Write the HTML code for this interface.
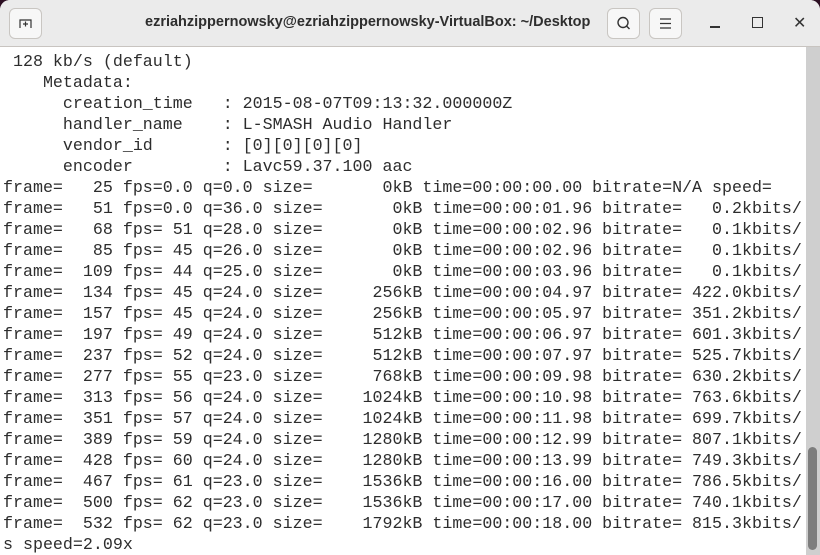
<!DOCTYPE html>
<html><head><style>
html,body{margin:0;padding:0;width:820px;height:555px;overflow:hidden;background:#2c0f22;}
.win{position:absolute;left:0;top:0;width:820px;height:555px;background:#fff;border-radius:10px 10px 0 0;overflow:hidden;}
.tb{position:absolute;left:0;top:0;width:820px;height:46px;background:#ebebeb;border-bottom:1px solid #c8c4c0;}
.title{position:absolute;left:145px;top:14px;white-space:nowrap;font:bold 14.5px "Liberation Sans",sans-serif;color:#2e2e2e;}
.btn{position:absolute;top:8px;width:33px;height:31px;border:1px solid #c9c6c2;border-radius:6px;background:#f7f7f7;box-sizing:border-box;}
.term{position:absolute;left:3px;top:51px;font-family:"Liberation Mono","DejaVu Sans Mono",monospace;font-size:16.65px;line-height:21px;color:#2d2d2d;white-space:pre;}
.sb{position:absolute;left:806px;top:47px;width:14px;height:508px;background:#cfcfcf;}
.th{position:absolute;left:808px;top:447px;width:9px;height:103px;background:#7d7d7d;border-radius:5px;}
</style></head><body>
<div class="win">
<div class="tb">
 <div class="btn" style="left:9px"><svg width="31" height="29" viewBox="0 0 31 29"><path d="M10 19V11h11v8M15.5 12.5v5M13 15h5" fill="none" stroke="#333" stroke-width="1.2"/></svg></div>
 <div class="title">ezriahzippernowsky@ezriahzippernowsky-VirtualBox: ~/Desktop</div>
 <div class="btn" style="left:607px"><svg width="31" height="29" viewBox="0 0 31 29"><circle cx="15" cy="13.5" r="5" fill="none" stroke="#333" stroke-width="1.4"/><path d="M18.5 17l3 3" stroke="#333" stroke-width="1.4"/></svg></div>
 <div class="btn" style="left:649px"><svg width="31" height="29" viewBox="0 0 31 29"><path d="M10 10h11M10 14.5h11M10 19h11" stroke="#333" stroke-width="1.2"/></svg></div>
 <div style="position:absolute;left:710px;top:26px;width:10px;height:1.5px;background:#333"></div>
 <div style="position:absolute;left:752px;top:17px;width:9px;height:9px;border:1.3px solid #333"></div>
 <div style="position:absolute;left:793px;top:13px;font:16px 'DejaVu Sans',sans-serif;color:#333">✕</div>
</div>
<div class="term"> 128 kb/s (default)
    Metadata:
      creation_time   : 2015-08-07T09:13:32.000000Z
      handler_name    : L-SMASH Audio Handler
      vendor_id       : [0][0][0][0]
      encoder         : Lavc59.37.100 aac
frame=   25 fps=0.0 q=0.0 size=       0kB time=00:00:00.00 bitrate=N/A speed=
frame=   51 fps=0.0 q=36.0 size=       0kB time=00:00:01.96 bitrate=   0.2kbits/
frame=   68 fps= 51 q=28.0 size=       0kB time=00:00:02.96 bitrate=   0.1kbits/
frame=   85 fps= 45 q=26.0 size=       0kB time=00:00:02.96 bitrate=   0.1kbits/
frame=  109 fps= 44 q=25.0 size=       0kB time=00:00:03.96 bitrate=   0.1kbits/
frame=  134 fps= 45 q=24.0 size=     256kB time=00:00:04.97 bitrate= 422.0kbits/
frame=  157 fps= 45 q=24.0 size=     256kB time=00:00:05.97 bitrate= 351.2kbits/
frame=  197 fps= 49 q=24.0 size=     512kB time=00:00:06.97 bitrate= 601.3kbits/
frame=  237 fps= 52 q=24.0 size=     512kB time=00:00:07.97 bitrate= 525.7kbits/
frame=  277 fps= 55 q=23.0 size=     768kB time=00:00:09.98 bitrate= 630.2kbits/
frame=  313 fps= 56 q=24.0 size=    1024kB time=00:00:10.98 bitrate= 763.6kbits/
frame=  351 fps= 57 q=24.0 size=    1024kB time=00:00:11.98 bitrate= 699.7kbits/
frame=  389 fps= 59 q=24.0 size=    1280kB time=00:00:12.99 bitrate= 807.1kbits/
frame=  428 fps= 60 q=24.0 size=    1280kB time=00:00:13.99 bitrate= 749.3kbits/
frame=  467 fps= 61 q=23.0 size=    1536kB time=00:00:16.00 bitrate= 786.5kbits/
frame=  500 fps= 62 q=23.0 size=    1536kB time=00:00:17.00 bitrate= 740.1kbits/
frame=  532 fps= 62 q=23.0 size=    1792kB time=00:00:18.00 bitrate= 815.3kbits/
s speed=2.09x</div>
<div class="sb"></div><div class="th"></div>
</div>
</body></html>
